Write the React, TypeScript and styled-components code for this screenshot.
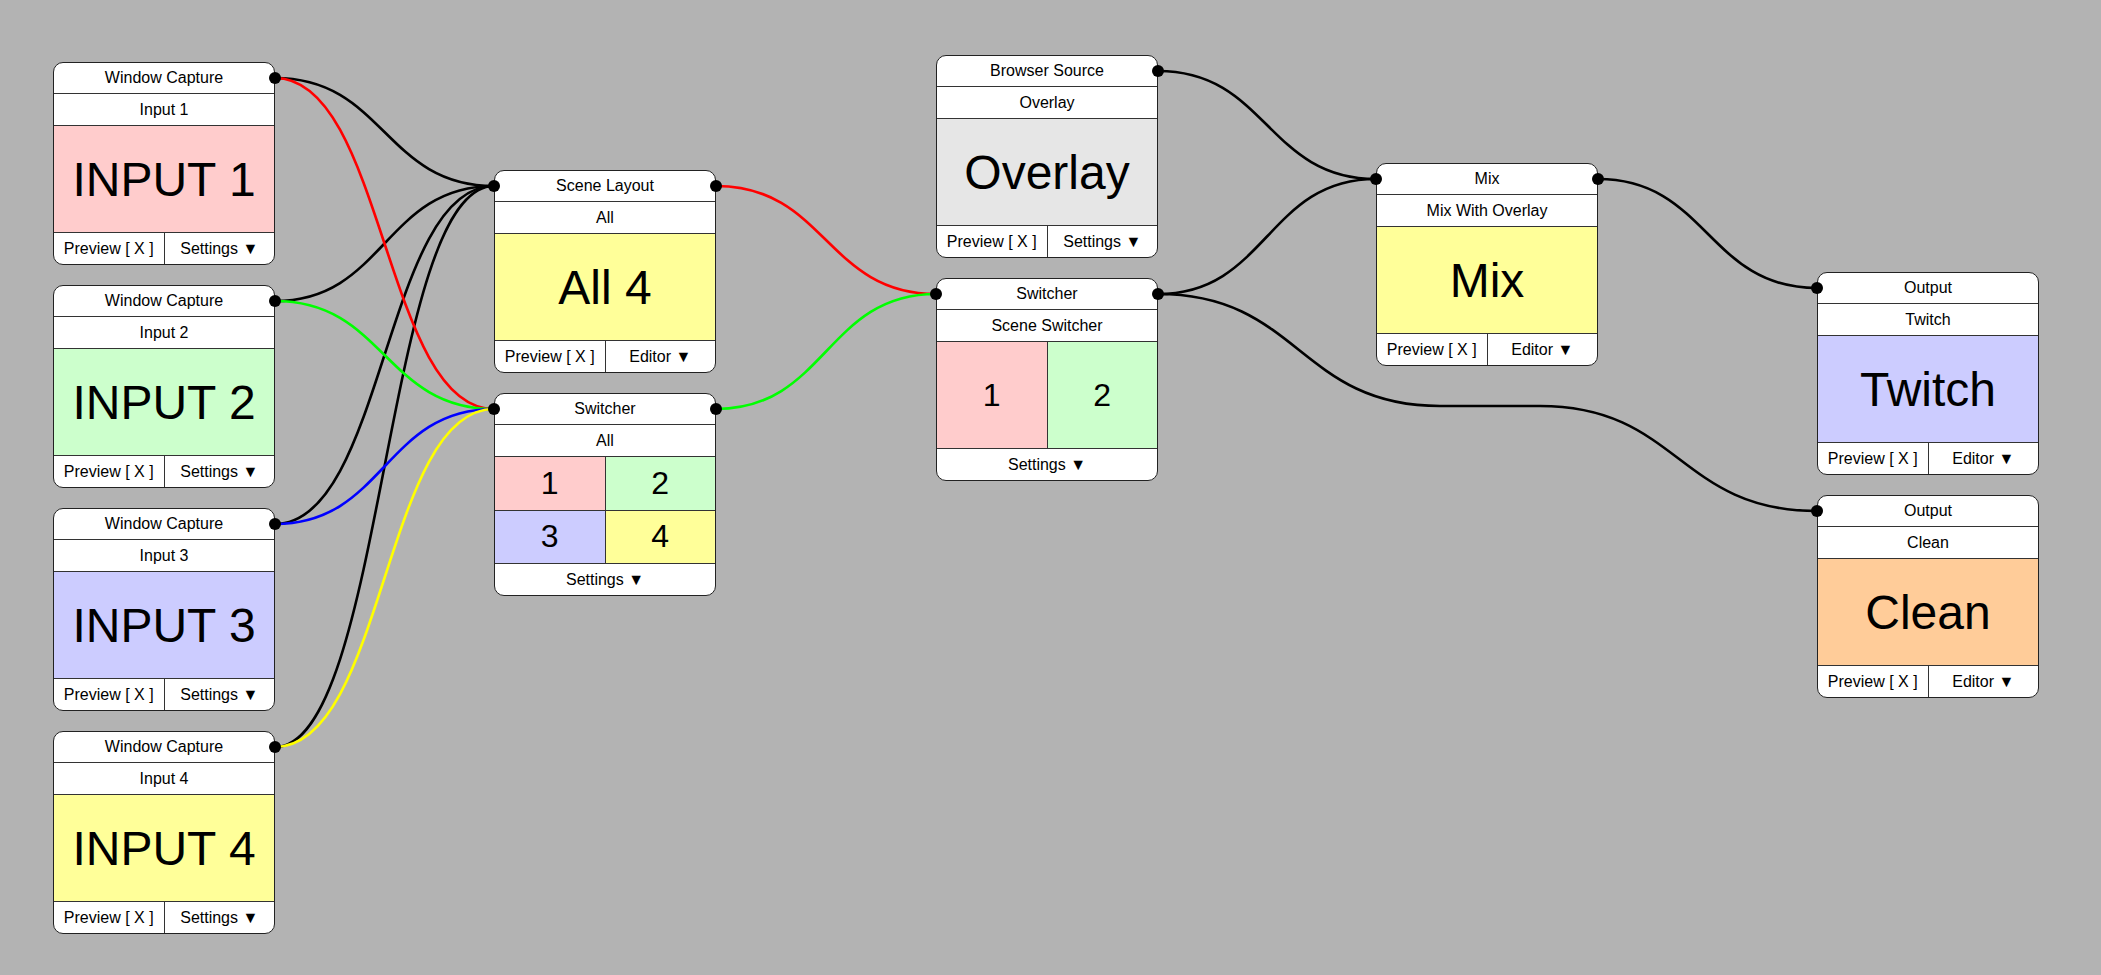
import React from 'react';
import styled, { createGlobalStyle } from 'styled-components';

const GlobalStyle = createGlobalStyle`
  html, body { margin: 0; padding: 0; background: #b3b3b3; }
  body { font-family: "Liberation Sans", Arial, sans-serif; color: #000; }
  *, *::before, *::after { box-sizing: border-box; }
`;

const NODE_W = 222;
const PORT_DY = 16;
const LINE = '#333';

type Cell = { label: string; color: string };
type Body =
  | { kind: 'text'; label: string; color: string }
  | { kind: 'grid'; cells: Cell[] };

type NodeData = {
  id: string;
  x: number;
  y: number;
  title: string;
  subtitle: string;
  body: Body;
  preview: boolean;
  action: string;
  input: boolean;
  output: boolean;
};

type LinkData = {
  from: string;
  to: string;
  color: string;
  via?: { y: number; x1: number; x2: number };
};

const PINK = '#ffcccc';
const GREEN = '#ccffcc';
const BLUE = '#ccccff';
const YELLOW = '#ffff99';
const GREY = '#e6e6e6';
const ORANGE = '#ffcc99';

const nodes: NodeData[] = [
  { id: 'in1', x: 53, y: 62, title: 'Window Capture', subtitle: 'Input 1', body: { kind: 'text', label: 'INPUT 1', color: PINK }, preview: true, action: 'Settings ▼', input: false, output: true },
  { id: 'in2', x: 53, y: 285, title: 'Window Capture', subtitle: 'Input 2', body: { kind: 'text', label: 'INPUT 2', color: GREEN }, preview: true, action: 'Settings ▼', input: false, output: true },
  { id: 'in3', x: 53, y: 508, title: 'Window Capture', subtitle: 'Input 3', body: { kind: 'text', label: 'INPUT 3', color: BLUE }, preview: true, action: 'Settings ▼', input: false, output: true },
  { id: 'in4', x: 53, y: 731, title: 'Window Capture', subtitle: 'Input 4', body: { kind: 'text', label: 'INPUT 4', color: YELLOW }, preview: true, action: 'Settings ▼', input: false, output: true },
  { id: 'scene', x: 494, y: 170, title: 'Scene Layout', subtitle: 'All', body: { kind: 'text', label: 'All 4', color: YELLOW }, preview: true, action: 'Editor ▼', input: true, output: true },
  {
    id: 'swL', x: 494, y: 393, title: 'Switcher', subtitle: 'All',
    body: { kind: 'grid', cells: [ { label: '1', color: PINK }, { label: '2', color: GREEN }, { label: '3', color: BLUE }, { label: '4', color: YELLOW } ] },
    preview: false, action: 'Settings ▼', input: true, output: true,
  },
  { id: 'browser', x: 936, y: 55, title: 'Browser Source', subtitle: 'Overlay', body: { kind: 'text', label: 'Overlay', color: GREY }, preview: true, action: 'Settings ▼', input: false, output: true },
  {
    id: 'swM', x: 936, y: 278, title: 'Switcher', subtitle: 'Scene Switcher',
    body: { kind: 'grid', cells: [ { label: '1', color: PINK }, { label: '2', color: GREEN } ] },
    preview: false, action: 'Settings ▼', input: true, output: true,
  },
  { id: 'mix', x: 1376, y: 163, title: 'Mix', subtitle: 'Mix With Overlay', body: { kind: 'text', label: 'Mix', color: YELLOW }, preview: true, action: 'Editor ▼', input: true, output: true },
  { id: 'twitch', x: 1817, y: 272, title: 'Output', subtitle: 'Twitch', body: { kind: 'text', label: 'Twitch', color: BLUE }, preview: true, action: 'Editor ▼', input: true, output: false },
  { id: 'clean', x: 1817, y: 495, title: 'Output', subtitle: 'Clean', body: { kind: 'text', label: 'Clean', color: ORANGE }, preview: true, action: 'Editor ▼', input: true, output: false },
];

const links: LinkData[] = [
  { from: 'in1', to: 'scene', color: '#000' },
  { from: 'in2', to: 'scene', color: '#000' },
  { from: 'in3', to: 'scene', color: '#000' },
  { from: 'in4', to: 'scene', color: '#000' },
  { from: 'browser', to: 'mix', color: '#000' },
  { from: 'swM', to: 'mix', color: '#000' },
  { from: 'mix', to: 'twitch', color: '#000' },
  { from: 'swM', to: 'clean', color: '#000', via: { y: 406, x1: 1440, x2: 1540 } },
  { from: 'in1', to: 'swL', color: '#ff0000' },
  { from: 'in2', to: 'swL', color: '#00ff00' },
  { from: 'in3', to: 'swL', color: '#0000ff' },
  { from: 'in4', to: 'swL', color: '#ffff00' },
  { from: 'scene', to: 'swM', color: '#ff0000' },
  { from: 'swL', to: 'swM', color: '#00ff00' },
];

const byId = (id: string) => nodes.find((n) => n.id === id)!;

const sCurve = (x1: number, y1: number, x2: number, y2: number) => {
  const d = (x2 - x1) / 2;
  return `C ${x1 + d} ${y1}, ${x2 - d} ${y2}, ${x2} ${y2}`;
};

const linkPath = (l: LinkData) => {
  const a = byId(l.from);
  const b = byId(l.to);
  const x1 = a.x + NODE_W;
  const y1 = a.y + PORT_DY;
  const x2 = b.x;
  const y2 = b.y + PORT_DY;
  if (l.via) {
    return `M ${x1} ${y1} ${sCurve(x1, y1, l.via.x1, l.via.y)} L ${l.via.x2} ${l.via.y} ${sCurve(l.via.x2, l.via.y, x2, y2)}`;
  }
  return `M ${x1} ${y1} ${sCurve(x1, y1, x2, y2)}`;
};

const Canvas = styled.div`
  position: relative;
  width: 2101px;
  height: 975px;
  overflow: hidden;
  background: #b3b3b3;
`;

const Wires = styled.svg`
  position: absolute;
  inset: 0;
  width: 100%;
  height: 100%;
  pointer-events: none;
`;

const NodeBox = styled.div<{ $x: number; $y: number }>`
  position: absolute;
  left: ${(p) => p.$x}px;
  top: ${(p) => p.$y}px;
  width: ${NODE_W}px;
  display: flex;
  flex-direction: column;
  background: #fff;
  border: 1px solid #222;
  border-radius: 10px;
`;

const Header = styled.div`
  height: 31px;
  display: flex;
  align-items: center;
  justify-content: center;
  font-size: 16px;
  border-bottom: 1px solid ${LINE};
`;

const SubHeader = styled.div`
  height: 32px;
  display: flex;
  align-items: center;
  justify-content: center;
  font-size: 16px;
  border-bottom: 1px solid ${LINE};
`;

const Preview = styled.div<{ $bg: string }>`
  height: 107px;
  display: flex;
  align-items: center;
  justify-content: center;
  font-size: 48px;
  background: ${(p) => p.$bg};
  border-bottom: 1px solid ${LINE};
`;

const CellGrid = styled.div<{ $rows: number }>`
  height: 107px;
  display: grid;
  grid-template-columns: 1fr 1fr;
  grid-template-rows: repeat(${(p) => p.$rows}, 1fr);
  gap: 1px;
  background: ${LINE};
  border-bottom: 1px solid ${LINE};
`;

const GridCell = styled.div<{ $bg: string }>`
  display: flex;
  align-items: center;
  justify-content: center;
  font-size: 32px;
  background: ${(p) => p.$bg};
`;

const Footer = styled.div`
  height: 31px;
  display: flex;
  border-radius: 0 0 10px 10px;
`;

const FooterCell = styled.div`
  flex: 1;
  display: flex;
  align-items: center;
  justify-content: center;
  font-size: 16px;
  white-space: nowrap;
  & + & {
    border-left: 1px solid ${LINE};
  }
`;

const Port = styled.span<{ $side: 'left' | 'right' }>`
  position: absolute;
  top: 9px;
  ${(p) => (p.$side === 'left' ? 'left: -7px;' : 'right: -7px;')}
  width: 12px;
  height: 12px;
  border-radius: 50%;
  background: #000;
`;

const Node: React.FC<{ data: NodeData }> = ({ data }) => {
  const { body } = data;
  return (
    <NodeBox $x={data.x} $y={data.y}>
      <Header>{data.title}</Header>
      <SubHeader>{data.subtitle}</SubHeader>
      {body.kind === 'text' ? (
        <Preview $bg={body.color}>{body.label}</Preview>
      ) : (
        <CellGrid $rows={Math.ceil(body.cells.length / 2)}>
          {body.cells.map((c) => (
            <GridCell key={c.label} $bg={c.color}>{c.label}</GridCell>
          ))}
        </CellGrid>
      )}
      <Footer>
        {data.preview && <FooterCell>Preview [ X ]</FooterCell>}
        <FooterCell>{data.action}</FooterCell>
      </Footer>
      {data.input && <Port $side="left" />}
      {data.output && <Port $side="right" />}
    </NodeBox>
  );
};

export default function App() {
  return (
    <>
      <GlobalStyle />
      <Canvas>
        <Wires viewBox="0 0 2101 975">
          {links.map((l, i) => (
            <path key={i} d={linkPath(l)} fill="none" stroke={l.color} strokeWidth={2.6} />
          ))}
        </Wires>
        {nodes.map((n) => (
          <Node key={n.id} data={n} />
        ))}
      </Canvas>
    </>
  );
}
